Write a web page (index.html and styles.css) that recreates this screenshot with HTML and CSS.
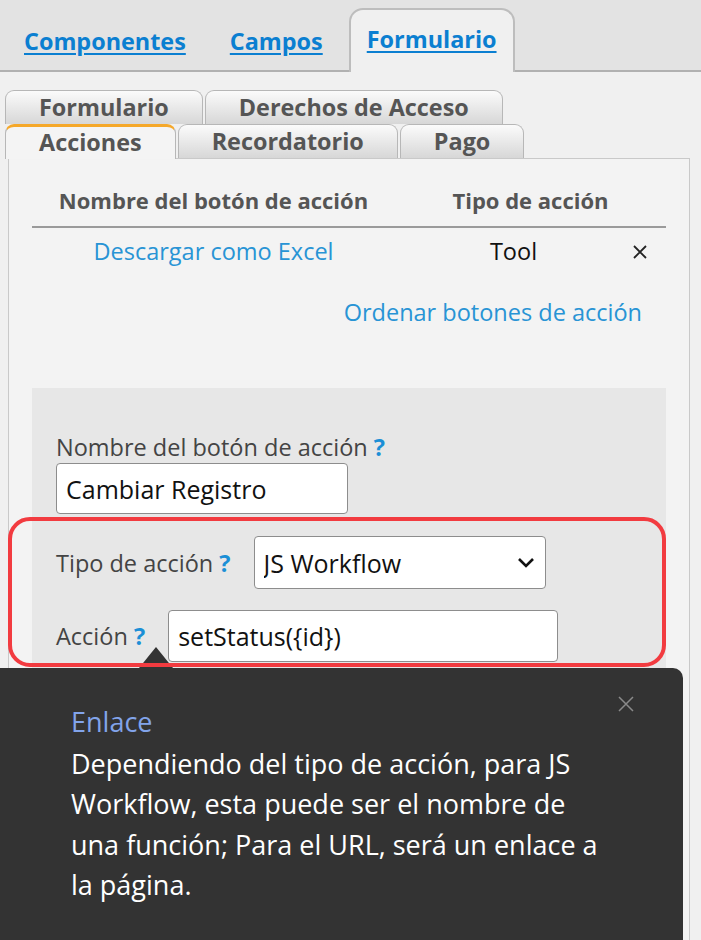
FILE: index.html
```html
<!DOCTYPE html>
<html lang="es">
<head>
  <meta charset="UTF-8">
  <meta name="viewport" content="width=device-width, initial-scale=1.0">
  <title>Acciones</title>
  <link rel="stylesheet" href="styles.css">
</head>
<body>
  <div class="topbar">
    <a class="top-tab" href="#">Componentes</a>
    <a class="top-tab" href="#">Campos</a>
    <a class="top-tab active" href="#">Formulario</a>
  </div>

  <div class="subtabs">
    <div class="tab-row">
      <span class="sub-tab">Formulario</span>
      <span class="sub-tab">Derechos de Acceso</span>
    </div>
    <div class="tab-row">
      <span class="sub-tab active">Acciones</span>
      <span class="sub-tab">Recordatorio</span>
      <span class="sub-tab">Pago</span>
    </div>
  </div>

  <div class="panel">
    <table class="actions-table">
      <thead>
        <tr>
          <th class="col-name">Nombre del botón de acción</th>
          <th colspan="2">Tipo de acción</th>
        </tr>
      </thead>
      <tbody>
        <tr>
          <td class="col-name"><a href="#">Descargar como Excel</a></td>
          <td class="col-type">Tool</td>
          <td class="col-del">
            <svg width="16" height="16" viewBox="0 0 16 16"><path d="M2 2 L14 14 M14 2 L2 14" stroke="#222" stroke-width="1.8" fill="none"/></svg>
          </td>
        </tr>
      </tbody>
    </table>

    <div class="sort-link"><a href="#">Ordenar botones de acción</a></div>

    <div class="edit-box">
      <div class="field">
        <label for="btn-name">Nombre del botón de acción <span class="help">?</span></label>
        <input type="text" id="btn-name" class="text-input" value="Cambiar Registro">
      </div>
      <div class="field inline">
        <label for="btn-type">Tipo de acción <span class="help">?</span></label>
        <div class="select-wrap">
          <select id="btn-type" class="select-input">
            <option>JS Workflow</option>
            <option>URL</option>
          </select>
          <svg class="chevron" width="18" height="11" viewBox="0 0 18 11"><path d="M2 2 L9 9 L16 2" stroke="#111" stroke-width="2.6" fill="none"/></svg>
        </div>
      </div>
      <div class="field inline">
        <label for="btn-action">Acción <span class="help">?</span></label>
        <input type="text" id="btn-action" class="text-input wide" value="setStatus({id})">
      </div>
    </div>
  </div>

  <div class="tooltip">
    <span class="tooltip-arrow"></span>
    <svg class="tooltip-close" width="16" height="16" viewBox="0 0 16 16"><path d="M1 1 L15 15 M15 1 L1 15" stroke="#8a8a8a" stroke-width="1.5" fill="none"/></svg>
    <div class="tooltip-title">Enlace</div>
    <p class="tooltip-text">Dependiendo del tipo de acción, para JS Workflow, esta puede ser el nombre de una función; Para el URL, será un enlace a la página.</p>
  </div>

  <div class="highlight"></div>
</body>
</html>
```

FILE: styles.css
```css
body {
  margin: 0;
  height: 940px;
  overflow: hidden;
  position: relative;
  background: #f0f0f0;
  font-family: "Open Sans", "Noto Sans", sans-serif;
  color: #444;
}

/* top level tabs */
.topbar {
  height: 70px;
  display: flex;
  align-items: flex-end;
  gap: 8px;
  padding-left: 6px;
  background: #e3e3e3;
  border-bottom: 2px solid #b1b1b1;
}

.top-tab {
  height: 62px;
  margin-bottom: -2px;
  padding: 12px 16px 0;
  box-sizing: border-box;
  border: 2px solid transparent;
  border-bottom: none;
  border-radius: 14px 14px 0 0;
  font-size: 23.4px;
  font-weight: bold;
  line-height: 34px;
  color: #0b7fd1;
  text-decoration: underline;
  text-underline-offset: 3px;
}

.top-tab.active {
  height: 64px;
  background: #f0f0f0;
  border-color: #bdbdbd;
}

/* second level tabs */
.subtabs {
  padding: 18px 0 0 5px;
}

.tab-row {
  display: flex;
  height: 34px;
}

.sub-tab {
  height: 34px;
  margin-right: 2px;
  padding: 0 33px;
  box-sizing: border-box;
  border: 1px solid #b7b7b7;
  border-bottom: none;
  border-radius: 9px 9px 0 0;
  background: linear-gradient(#fbfbfb, #d7d7d7);
  font-size: 23.4px;
  font-weight: bold;
  line-height: 33px;
  color: #555;
}

.sub-tab.active {
  position: relative;
  z-index: 1;
  height: 35px;
  border-top: 3px solid #f5a82a;
  background: #f4f4f4;
  line-height: 31px;
}

/* content panel */
.panel {
  width: 682px;
  margin-left: 8px;
  padding: 0 23px;
  box-sizing: border-box;
  background: #f3f3f3;
  border: 1px solid #c9c9c9;
  border-bottom: none;
}

.actions-table {
  width: 100%;
  margin-top: 16px;
  border-collapse: collapse;
}

.actions-table th {
  padding: 10px 0;
  font-size: 22px;
  line-height: 31px;
  color: #555;
  border-bottom: 2px solid #9a9a9a;
}

.actions-table td {
  padding: 6px 0;
  font-size: 23.5px;
  line-height: 35px;
  text-align: center;
}

.col-name {
  width: 363px;
}

.col-type {
  width: 237px;
  color: #111;
}

.col-del {
  text-align: left !important;
}

.col-del svg {
  display: block;
}

a {
  color: #2894d5;
  text-decoration: none;
}

.sort-link {
  margin-top: 20px;
  padding-right: 24px;
  text-align: right;
  font-size: 23.5px;
  line-height: 35px;
}

/* edit form */
.edit-box {
  margin-top: 58px;
  padding: 43px 24px 300px;
  background: #e7e7e7;
}

.field {
  font-size: 23.5px;
}

.field label {
  display: block;
  line-height: 32px;
  color: #444;
}

.field.inline {
  display: flex;
  align-items: center;
  gap: 23px;
  margin-top: 22px;
}

.field.inline + .field.inline {
  margin-top: 21px;
}

.help {
  color: #1b8fd6;
  font-weight: bold;
}

.text-input,
.select-input {
  width: 292px;
  height: 51px;
  padding: 0 9px;
  box-sizing: border-box;
  border: 1px solid #8d8d8d;
  border-radius: 4px;
  background: #fff;
  font-family: inherit;
  font-size: 25px;
  color: #111;
}

.text-input.wide {
  width: 390px;
  height: 52px;
}

.select-wrap {
  position: relative;
}

.select-input {
  display: block;
  height: 53px;
  -webkit-appearance: none;
  appearance: none;
}

.chevron {
  position: absolute;
  right: 11px;
  top: 21px;
}

/* help tooltip */
.tooltip {
  position: absolute;
  left: 0;
  top: 668px;
  z-index: 2;
  width: 683px;
  height: 300px;
  padding: 34px 0 0 71px;
  box-sizing: border-box;
  background: #333;
  border-radius: 0 10px 0 0;
  color: #fff;
  font-size: 27px;
  line-height: 40.5px;
}

.tooltip-arrow {
  position: absolute;
  left: 139px;
  top: -21px;
  border-left: 17px solid transparent;
  border-right: 17px solid transparent;
  border-bottom: 21px solid #333;
}

.tooltip-close {
  position: absolute;
  right: 49px;
  top: 28px;
}

.tooltip-title {
  color: #82a4ea;
}

.tooltip-text {
  width: 545px;
  margin: 1px 0 0;
}

/* red annotation frame */
.highlight {
  position: absolute;
  left: 8px;
  top: 517px;
  z-index: 3;
  width: 658px;
  height: 150px;
  box-sizing: border-box;
  border: 4px solid #f23b40;
  border-radius: 22px;
}
```
